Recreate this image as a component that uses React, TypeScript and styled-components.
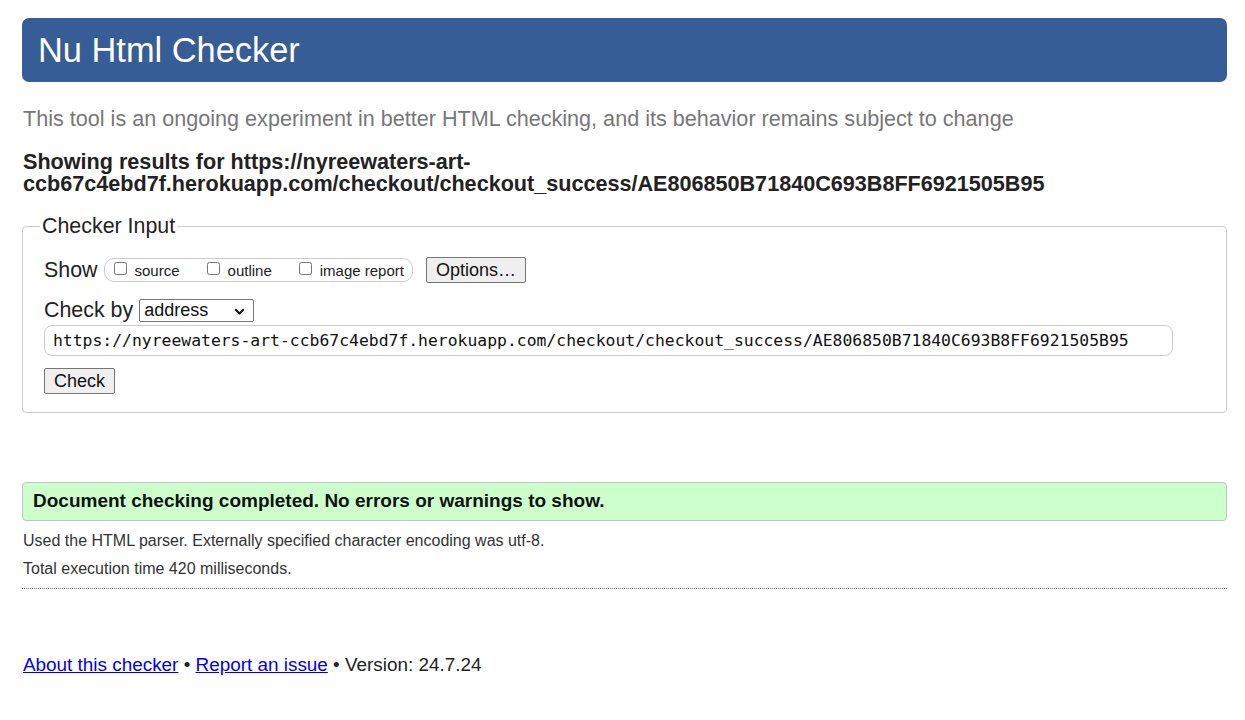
import React from "react";
import styled, { createGlobalStyle } from "styled-components";

const GlobalStyle = createGlobalStyle`
  html, body {
    margin: 0;
    padding: 0;
    background: #ffffff;
  }
  body {
    font-family: "Liberation Sans", Arial, sans-serif;
    color: #222222;
  }
`;

const Page = styled.div`
  padding: 18px 18px 40px 22px;
`;

const Header = styled.header`
  height: 64px;
  background: #365d95;
  border-radius: 7px;
  padding-left: 16px;
  color: #ffffff;
  font-size: 34.4px;
  line-height: 64px;
`;

const Tagline = styled.p`
  margin: 25px 0 0 1px;
  font-size: 21.6px;
  line-height: 24px;
  color: #777777;
`;

const ResultsFor = styled.h2`
  margin: 20px 0 0 1px;
  font-size: 21.6px;
  line-height: 22px;
  font-weight: bold;
  color: #222222;
`;

const Fieldset = styled.fieldset`
  margin: 19px 0 0 0;
  border: 1px solid #cccccc;
  border-radius: 4px;
  padding: 18px 21px 18px 21px;
  min-width: 0;
`;

const Legend = styled.legend`
  margin-left: -4px;
  padding: 0 2px;
  font-size: 21.4px;
  line-height: 24px;
  color: #222222;
`;

const Row = styled.div<{ $top?: number }>`
  display: flex;
  align-items: center;
  height: 28px;
  margin-top: ${(p) => p.$top ?? 0}px;
`;

const RowLabel = styled.span<{ $gap?: number }>`
  font-size: 21.4px;
  color: #222222;
  margin-right: ${(p) => p.$gap ?? 6}px;
`;

const Toggles = styled.div`
  display: flex;
  align-items: center;
  gap: 27px;
  height: 22px;
  border: 1px solid #cccccc;
  border-radius: 10px;
  padding: 0 8px 0 9px;
  margin-right: 13px;
`;

const Toggle = styled.label`
  display: inline-flex;
  align-items: center;
  font-size: 15px;
  color: #222222;

  input {
    margin: 0 8px 4px 0;
    width: 13px;
    height: 13px;
  }
`;

const Button = styled.button`
  font-family: "Liberation Sans", Arial, sans-serif;
  font-size: 18px;
  color: #111111;
  background: #efefef;
  border: 1px solid #767676;
  border-radius: 2px;
  height: 26px;
  padding: 0 9px;
`;

const SelectWrap = styled.span`
  position: relative;
  display: inline-flex;

  svg {
    position: absolute;
    right: 9px;
    top: 9px;
    pointer-events: none;
  }
`;

const Select = styled.select`
  appearance: none;
  font-family: "Liberation Sans", Arial, sans-serif;
  font-size: 18px;
  color: #111111;
  width: 115px;
  height: 23px;
  border: 1px solid #767676;
  border-radius: 2px;
  background: #ffffff;
  padding: 0 4px;
`;

const UrlInput = styled.input`
  display: block;
  box-sizing: border-box;
  width: 1129px;
  height: 31px;
  margin-top: 1px;
  border: 1px solid #cccccc;
  border-radius: 8px;
  padding: 0 8px;
  font-family: "DejaVu Sans Mono", monospace;
  font-size: 16.4px;
  color: #111111;
  background: #ffffff;
`;

const CheckRow = styled.div`
  margin-top: 12px;
`;

const Success = styled.div`
  margin-top: 69px;
  box-sizing: border-box;
  height: 39px;
  background: #ccffcc;
  border: 1px solid #c4c4c4;
  border-radius: 4px;
  padding-left: 10px;
  font-size: 19px;
  font-weight: bold;
  line-height: 36px;
  color: #111111;
`;

const Details = styled.div`
  border-bottom: 1px dotted #777777;
  padding: 12px 0 11px 1px;
`;

const Note = styled.p<{ $top?: number }>`
  margin: ${(p) => p.$top ?? 0}px 0 0 0;
  font-size: 16px;
  line-height: 16px;
  color: #333333;
`;

const Footer = styled.p`
  margin: 65px 0 0 1px;
  font-size: 18.9px;
  line-height: 22px;
  color: #222222;

  a {
    color: #0000ee;
    text-decoration: underline;
  }
`;

const url =
  "https://nyreewaters-art-ccb67c4ebd7f.herokuapp.com/checkout/checkout_success/AE806850B71840C693B8FF6921505B95";

export default function App() {
  return (
    <>
      <GlobalStyle />
      <Page>
        <Header>Nu Html Checker</Header>
        <Tagline>
          This tool is an ongoing experiment in better HTML checking, and its
          behavior remains subject to change
        </Tagline>
        <ResultsFor>Showing results for {url}</ResultsFor>

        <Fieldset>
          <Legend>Checker Input</Legend>
          <Row>
            <RowLabel>Show</RowLabel>
            <Toggles>
              <Toggle>
                <input type="checkbox" />
                source
              </Toggle>
              <Toggle>
                <input type="checkbox" />
                outline
              </Toggle>
              <Toggle>
                <input type="checkbox" />
                image report
              </Toggle>
            </Toggles>
            <Button>Options…</Button>
          </Row>
          <Row $top={12}>
            <RowLabel>Check by</RowLabel>
            <SelectWrap>
              <Select defaultValue="address">
                <option value="address">address</option>
                <option value="file">file upload</option>
                <option value="text">text input</option>
              </Select>
              <svg width="11" height="7" viewBox="0 0 11 7">
                <path d="M1.2 1.2 L5.5 5.4 L9.8 1.2" fill="none" stroke="#111" strokeWidth="2" />
              </svg>
            </SelectWrap>
          </Row>
          <UrlInput type="url" defaultValue={url} />
          <CheckRow>
            <Button>Check</Button>
          </CheckRow>
        </Fieldset>

        <Success>Document checking completed. No errors or warnings to show.</Success>
        <Details>
          <Note>Used the HTML parser. Externally specified character encoding was utf-8.</Note>
          <Note $top={12}>Total execution time 420 milliseconds.</Note>
        </Details>

        <Footer>
          <a href="#about">About this checker</a> • <a href="#issue">Report an issue</a> •
          Version: 24.7.24
        </Footer>
      </Page>
    </>
  );
}
